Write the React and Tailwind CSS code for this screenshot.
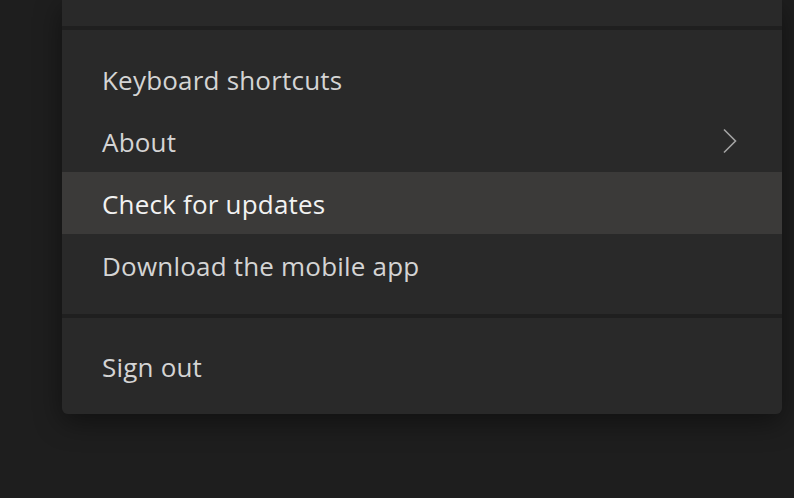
import React from 'react';

const items = [
  { label: 'Keyboard shortcuts' },
  { label: 'About', chevron: true },
  { label: 'Check for updates', active: true },
  { label: 'Download the mobile app' },
];

const Chevron = () => (
  <svg width="16" height="26" viewBox="0 0 16 26" fill="none" className="text-[#a3a3a3]">
    <path d="M2 1.5 L13.5 13 L2 24.5" stroke="currentColor" strokeWidth="1.6" />
  </svg>
);

const MenuItem = ({ label, chevron, active }) => (
  <div
    className={`h-[62px] flex items-center justify-between pl-10 pr-[44px] ${
      active ? 'bg-[#3b3a39] text-[#f2f2f2]' : 'text-[#d4d4d4]'
    }`}
  >
    <span className="text-[26px] leading-none tracking-[0.2px] mt-[2px]">{label}</span>
    {chevron && <Chevron />}
  </div>
);

export default function App() {
  return (
    <div
      className="w-[794px] h-[498px] overflow-hidden bg-[#1e1e1e] pl-[62px] pr-3"
      style={{ fontFamily: '"Open Sans", "Noto Sans", sans-serif' }}
    >
      <div className="flex flex-col gap-1 bg-[#1f1f1f] rounded-b-md shadow-[0_8px_28px_rgba(0,0,0,0.45)]">
        {/* top section, cut off by the window */}
        <div className="h-[26px] bg-[#292929]" />

        <div className="bg-[#292929] py-[18px]">
          {items.map((it) => (
            <MenuItem key={it.label} {...it} />
          ))}
        </div>

        <div className="bg-[#292929] py-[17px] rounded-b-md">
          <MenuItem label="Sign out" />
        </div>
      </div>
    </div>
  );
}
